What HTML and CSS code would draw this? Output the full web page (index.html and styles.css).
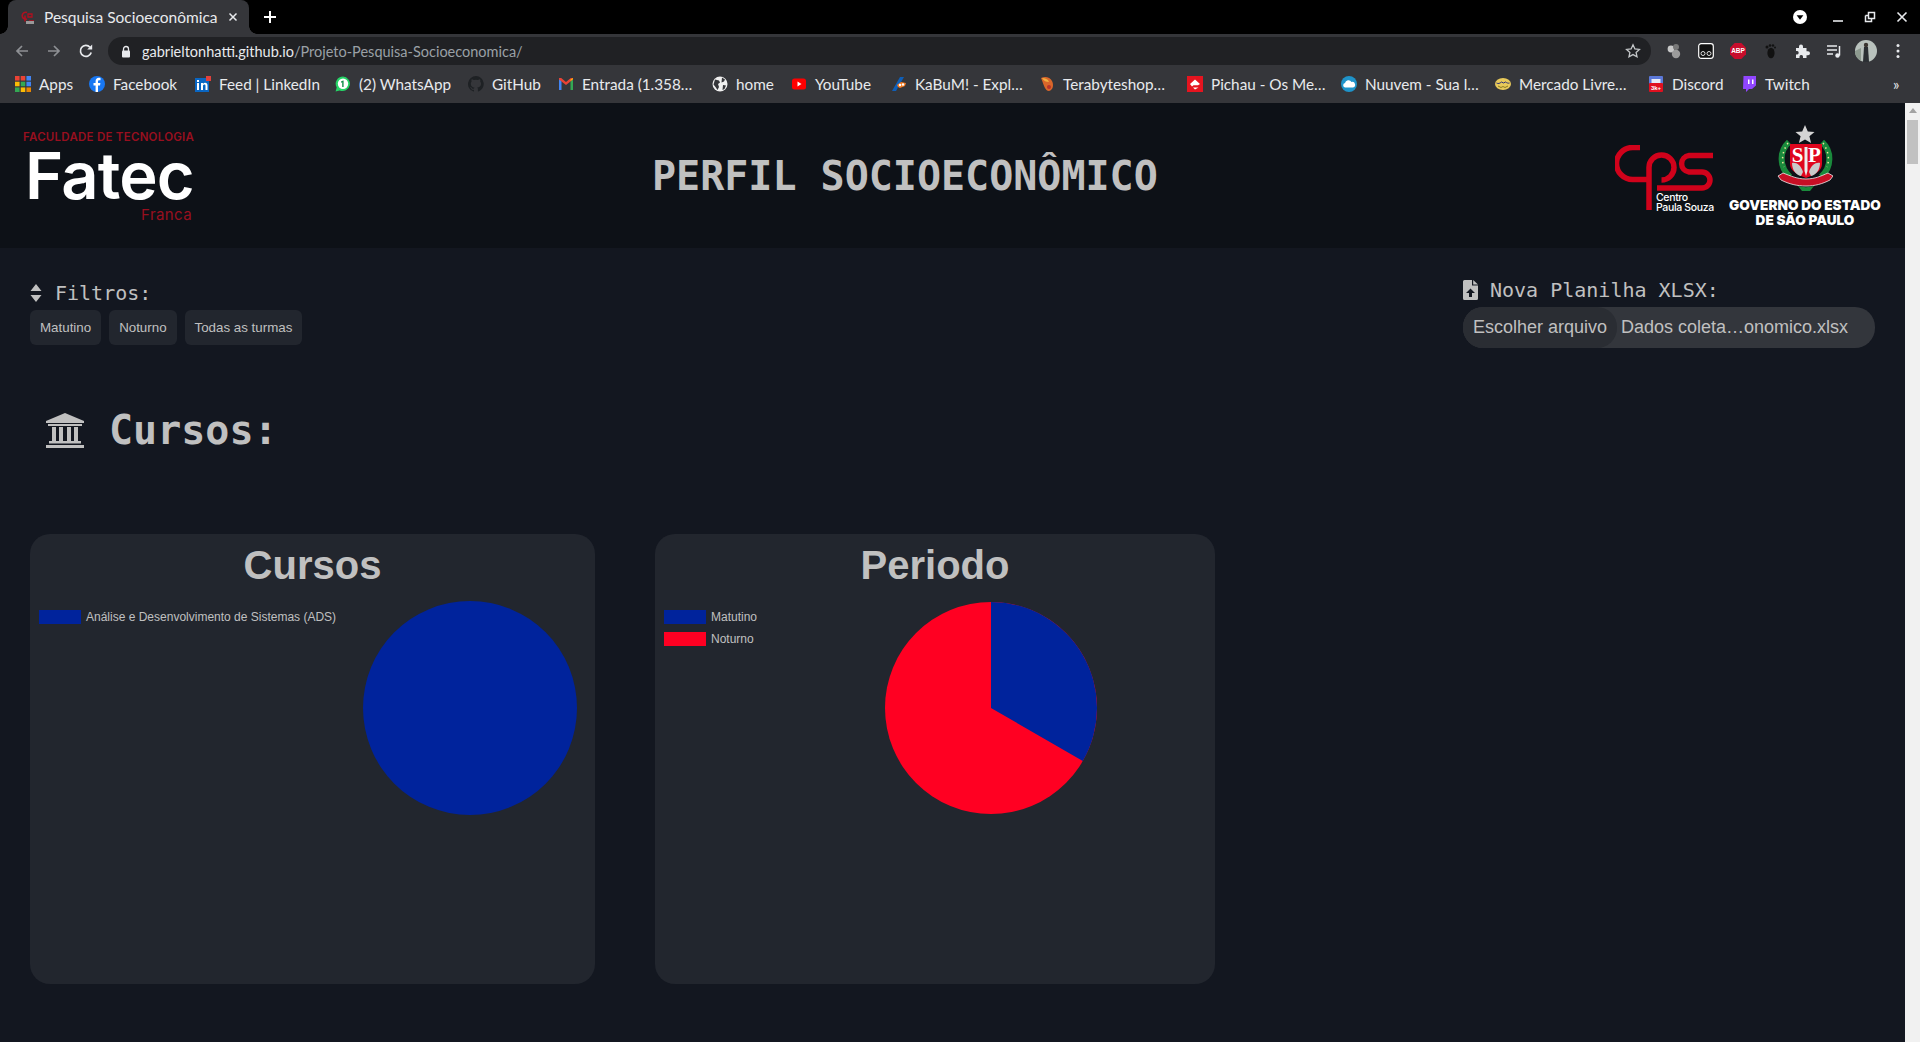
FILE: index.html
```html
<!DOCTYPE html>
<html lang="pt-BR">
<head>
<meta charset="utf-8">
<title>Pesquisa Socioeconômica</title>
<link rel="stylesheet" href="styles.css">
</head>
<body>
<div class="chrome">
  <div class="tabstrip">
    <div class="tab">
      <svg class="tab-fav" viewBox="0 0 16 16"><path d="M7 3.500A3.500 3.500 0 1 0 7 10M5 6.500v6" fill="none" stroke="#b0101f" stroke-width="1.600"/><path d="M8 5h4v3H8zM9 12h5" fill="none" stroke="#b0101f" stroke-width="1.300"/><rect x="6" y="12" width="8" height="3" fill="#999"/></svg>
      <span class="tab-title">Pesquisa Socioeconômica</span>
      <svg class="tab-close" viewBox="0 0 10 10"><path d="M1.500 1.500l7 7M8.500 1.500l-7 7" stroke="#e8eaed" stroke-width="1.500"/></svg>
    </div>
    <svg class="new-tab" viewBox="0 0 12 12"><path d="M6 0v12M0 6h12" stroke="#fff" stroke-width="2"/></svg>
    <div class="win-controls">
      <svg class="win-menu" viewBox="0 0 14 14"><circle cx="7" cy="7" r="7" fill="#fff"/><path d="M3.600 5.200h6.800L7 9.800z" fill="#000"/></svg>
      <svg class="win-btn" viewBox="0 0 12 12"><path d="M1 10h10" stroke="#e8eaed" stroke-width="1.600"/></svg>
      <svg class="win-btn" viewBox="0 0 12 12"><path d="M4.500 1.500h6v6h-6zM1.500 4.500h3M1.500 4.500v6h6v-3" fill="none" stroke="#e8eaed" stroke-width="1.500"/></svg>
      <svg class="win-btn" viewBox="0 0 12 12"><path d="M1.500 1.500l9 9M10.500 1.500l-9 9" stroke="#e8eaed" stroke-width="1.600"/></svg>
    </div>
  </div>
  <div class="toolbar">
    <svg class="nav-icon" viewBox="0 0 16 16"><path d="M14 8H3M8 3L3 8l5 5" fill="none" stroke="#8e9094" stroke-width="1.700"/></svg>
    <svg class="nav-icon" viewBox="0 0 16 16"><path d="M2 8h11M8 3l5 5-5 5" fill="none" stroke="#8e9094" stroke-width="1.700"/></svg>
    <svg class="nav-icon" viewBox="0 0 16 16"><path d="M13.200 9.500A5.500 5.500 0 1 1 12 4.200" fill="none" stroke="#e8eaed" stroke-width="1.700"/><path d="M14.200 1.500v5h-5z" fill="#e8eaed"/></svg>
    <div class="urlbar">
      <svg class="lock" viewBox="0 0 10 13"><path d="M2.500 6V4a2.500 2.500 0 0 1 5 0v2" fill="none" stroke="#e8eaed" stroke-width="1.300"/><rect x="1" y="5.500" width="8" height="7" rx="1" fill="#e8eaed"/></svg>
      <span class="url"><span class="url-host">gabrieltonhatti.github.io</span>/Projeto-Pesquisa-Socioeconomica/</span>
      <svg class="star" viewBox="0 0 16 16"><path d="M8 1.800l1.900 4.100 4.500.5-3.300 3 .9 4.400L8 11.600l-4 2.200.9-4.400-3.300-3 4.500-.5z" fill="none" stroke="#c4c7c9" stroke-width="1.300"/></svg>
    </div>
    <div class="extensions">
      <svg class="ext" viewBox="0 0 16 16"><circle cx="5" cy="6" r="3.400" fill="#c8c8c8"/><circle cx="10" cy="4" r="3" fill="#777"/><circle cx="10" cy="11" r="4.200" fill="#9b9b9b"/></svg>
      <svg class="ext" viewBox="0 0 16 16"><rect x=".7" y=".7" width="14.600" height="14.600" rx="2.500" fill="#111" stroke="#fff" stroke-width="1.200"/><circle cx="5" cy="10.500" r="2" fill="none" stroke="#ddd"/><circle cx="11" cy="10.500" r="2" fill="none" stroke="#ddd"/></svg>
      <svg class="ext" viewBox="0 0 16 16"><path d="M4.700 0h6.600L16 4.700v6.600L11.300 16H4.700L0 11.300V4.700z" fill="#c70d2c"/><text x="8" y="10.400" class="abp">ABP</text></svg>
      <svg class="ext" viewBox="0 0 16 16"><ellipse cx="9" cy="10" rx="3.600" ry="5.200" fill="#111"/><circle cx="5" cy="4" r="1.500" fill="#111"/><circle cx="8" cy="2.500" r="1.300" fill="#111"/><circle cx="11" cy="2.500" r="1.200" fill="#111"/><circle cx="13" cy="4.500" r="1" fill="#111"/></svg>
      <svg class="ext" viewBox="0 0 16 16"><path d="M2 5h3V3.500a2 2 0 0 1 4 0V5h3.500v3.300H14a2 2 0 0 1 0 4h-1.500V15H9v-1.500a1.800 1.800 0 0 0-3.500 0V15H2v-3.500h1.300a1.800 1.800 0 0 0 0-3.500H2z" fill="#e8eaed"/></svg>
      <svg class="ext" viewBox="0 0 16 16"><path d="M1 3h10M1 7h10M1 11h6" stroke="#e8eaed" stroke-width="1.500"/><path d="M13.500 3v9.500" stroke="#e8eaed" stroke-width="1.500"/><circle cx="11.500" cy="12.500" r="2.200" fill="#e8eaed"/></svg>
      <svg class="avatar" viewBox="0 0 22 22"><circle cx="11" cy="11" r="11" fill="#b9c2bd"/><path d="M0 11a11 11 0 0 0 6 10V8z" fill="#8d9a8f"/><path d="M9 7h4l1 15H8z" fill="#2b2f33"/><circle cx="11" cy="5" r="2.200" fill="#3a3530"/></svg>
      <svg class="ext-menu" viewBox="0 0 4 16"><circle cx="2" cy="2.500" r="1.500" fill="#e8eaed"/><circle cx="2" cy="8" r="1.500" fill="#e8eaed"/><circle cx="2" cy="13.500" r="1.500" fill="#e8eaed"/></svg>
    </div>
  </div>
  <div class="bookmarks">
    <div class="bm-grid">
      <div class="bm"><svg class="fav" viewBox="0 0 14 14"><path d="M0 0h4v4H0z" fill="#ea4335"/><path d="M5 0h4v4H5z" fill="#ea4335"/><path d="M10 0h4v4h-4z" fill="#4285f4"/><path d="M0 5h4v4H0z" fill="#fbbc05"/><path d="M5 5h4v4H5z" fill="#34a853"/><path d="M10 5h4v4h-4z" fill="#4285f4"/><path d="M0 10h4v4H0z" fill="#34a853"/><path d="M5 10h4v4H5z" fill="#fbbc05"/><path d="M10 10h4v4h-4z" fill="#ea8600"/></svg><span>Apps</span></div>
      <div class="bm"><svg class="fav" viewBox="0 0 16 16"><circle cx="8" cy="8" r="8" fill="#1877f2"/><path d="M9 16V9.500h2l.4-2.500H9V5.500c0-.8.400-1.300 1.400-1.300h1.100V2c-.6-.1-1.200-.2-1.900-.2C8 1.800 6.600 3 6.600 5.200V7H4.500v2.500h2.100V16z" fill="#fff"/></svg><span>Facebook</span></div>
      <div class="bm"><svg class="fav" viewBox="0 0 16 16"><rect y="2" width="14" height="14" fill="#0a66c2"/><rect x="11" y="0" width="5" height="5" fill="#e0413c"/><path d="M2 7h2v7H2zM2 4h2v2H2zM6 7h2v1c.5-.8 1.200-1.200 2.100-1.200 1.600 0 2.400 1 2.400 2.800V14h-2v-4c0-.9-.3-1.400-1.100-1.400S8 9.200 8 10v4H6z" fill="#fff"/></svg><span>Feed | LinkedIn</span></div>
      <div class="bm"><svg class="fav" viewBox="0 0 16 16"><path d="M8 .5a7.300 7.300 0 0 0-6.300 11L.6 15.500l4.100-1A7.300 7.300 0 1 0 8 .5z" fill="#25d366"/><circle cx="8" cy="7.800" r="5.200" fill="#fff"/><path d="M8.600 4.500v6.500H7.200V6.300L6 6.800V5.600l2-1.100z" fill="#128c4a"/></svg><span>(2) WhatsApp</span></div>
      <div class="bm"><svg class="fav" viewBox="0 0 16 16"><path d="M8 0a8 8 0 0 0-2.500 15.600c.4.100.5-.2.500-.4v-1.400c-2.200.5-2.700-1-2.700-1-.4-.9-.9-1.200-.9-1.200-.7-.5.100-.5.100-.5.800.100 1.200.8 1.200.8.700 1.200 1.900.9 2.300.7.100-.5.300-.9.500-1.100-1.800-.2-3.700-.9-3.700-4 0-.9.300-1.600.8-2.100-.1-.2-.4-1 .1-2.100 0 0 .7-.2 2.200.8a7.500 7.500 0 0 1 4 0c1.500-1 2.200-.8 2.200-.8.400 1.100.2 1.900.1 2.100.5.600.8 1.300.8 2.100 0 3.100-1.900 3.700-3.700 3.900.3.300.6.800.6 1.500v2.200c0 .2.100.5.600.4A8 8 0 0 0 8 0z" fill="#1e2124"/></svg><span>GitHub</span></div>
      <div class="bm"><svg class="fav" viewBox="0 0 16 16"><path d="M1 14V3l2.500 0L3.500 14z" fill="#4285f4"/><path d="M12.500 14V3L15 3v11z" fill="#34a853"/><path d="M1 3.500L8 9l7-5.500V2L12.800 2 8 6 3.200 2 1 2z" fill="#ea4335"/><path d="M12.500 5L15 3.200V2l-2.500 1.500z" fill="#fbbc05"/></svg><span>Entrada (1.358…</span></div>
      <div class="bm"><svg class="fav" viewBox="0 0 16 16"><circle cx="8" cy="8" r="7.500" fill="#f0f0f0"/><path d="M3 3.500l4 1 1 2-2 1.500 1 3-1.500 3-2-3-2-2.500zM10 1.500l3 2-1 2-2.500 1zM11 9l3 .5-1.500 3.500-2 1z" fill="#35363a"/></svg><span>home</span></div>
      <div class="bm"><svg class="fav" viewBox="0 0 16 16"><rect x="1" y="2.500" width="14" height="11" rx="2.500" fill="#f00"/><path d="M6.500 5.500v5l4-2.500z" fill="#fff"/></svg><span>YouTube</span></div>
      <div class="bm"><svg class="fav" viewBox="0 0 16 16"><path d="M1 15L9 1l4 0L5 15z" fill="#0f5fb8"/><path d="M6 9l4-3 5 1-1 3-5 2-2-1z" fill="#f47a20"/><circle cx="9" cy="9" r="1.200" fill="#fff"/><circle cx="12" cy="8.500" r="1.200" fill="#fff"/></svg><span>KaBuM! - Expl…</span></div>
      <div class="bm"><svg class="fav" viewBox="0 0 16 16"><path d="M2 2c4-2 9-1 11 3s1 9-3 10C6 15 5 9 2 2z" fill="#d9662a"/><path d="M3 2c3 0 6 1 7 4-3 0-5-1-7-4z" fill="#f0b040"/><circle cx="10" cy="11" r="2" fill="#b8322a"/></svg><span>Terabyteshop…</span></div>
      <div class="bm"><svg class="fav" viewBox="0 0 16 16"><rect width="16" height="16" fill="#e5141f"/><path d="M3 8l5-4.500L13 8l-2 1.200H6.500L5 10.500z" fill="#fff"/><path d="M6 11.500h5.500L8 13.500z" fill="#fff"/></svg><span>Pichau - Os Me…</span></div>
      <div class="bm"><svg class="fav" viewBox="0 0 16 16"><circle cx="8" cy="8" r="8" fill="#1f93c9"/><path d="M4 11.500a2.300 2.300 0 0 1 0-4.500 3.500 3.500 0 0 1 6.500-1 2.800 2.800 0 0 1 1.500 5.500z" fill="#fff"/></svg><span>Nuuvem - Sua l…</span></div>
      <div class="bm"><svg class="fav" viewBox="0 0 16 16"><ellipse cx="8" cy="8" rx="8" ry="6" fill="#e8c95a"/><path d="M1.500 7c2 1 3 .5 5-1l2 1 2-1c1.500 1 3 1.500 4 1" fill="none" stroke="#2d3277" stroke-width="1"/><path d="M3 10l3 1.500 2-1 2 1 3-1.500" fill="none" stroke="#8a7a20"/></svg><span>Mercado Livre…</span></div>
      <div class="bm"><svg class="fav" viewBox="0 0 16 16"><rect x="1" width="14" height="9" rx="1" fill="#5b78d8"/><rect x="3.500" y="3" width="9" height="4" fill="#e8ebf5"/><rect x="1" y="7" width="14" height="9" rx="1" fill="#e0101f"/><text x="8" y="14.200" class="k3">3k+</text></svg><span>Discord</span></div>
      <div class="bm"><svg class="fav" viewBox="0 0 16 16"><path d="M2.500 0H15v9.500L11 13H8l-3 3v-3H2z" fill="#9146ff"/><path d="M7 3.500h1.500v4.500H7zM11 3.500h1.500v4.500H11z" fill="#fff"/></svg><span>Twitch</span></div>
    </div>
    <span class="bm-more">»</span>
  </div>
</div>

<div class="viewport">
  <main class="page">
    <header class="site-header">
      <div class="fatec">
        <span class="fatec-top">FACULDADE DE TECNOLOGIA</span>
        <span class="fatec-name">Fatec</span>
        <span class="fatec-city">Franca</span>
      </div>
      <h1 class="site-title">PERFIL SOCIOECONÔMICO</h1>
      <div class="partner-logos">
        <div class="cps">
          <svg class="cps-mark" viewBox="0 0 98 65">
            <path d="M25 2.500H17.500A16 16 0 0 0 17.500 34.500H34" fill="none" stroke="#d0021b" stroke-width="5.500"/>
            <path d="M34 65V22.500A12.500 12.500 0 1 1 46.500 35" fill="none" stroke="#d0021b" stroke-width="5.500"/>
            <path d="M98 10.500H74A8.300 8.300 0 0 0 74 27H87A8 8 0 0 1 87 43H42" fill="none" stroke="#d0021b" stroke-width="5.500"/>
          </svg>
          <span class="cps-text">Centro<br>Paula Souza</span>
        </div>
        <div class="gov">
          <svg class="arms" viewBox="0 0 56 67">
            <path d="M28 0l2.800 6.400 6.700.5-5.100 4.400 1.700 6.700-6.100-3.600-6.100 3.600 1.700-6.700-5.100-4.400 6.700-.5z" fill="#d4d4d4"/>
            <path d="M12 17C2 26 2 42 13 52M45 17C55 26 55 42 44 52" fill="none" stroke="#1a8a3c" stroke-width="6"/>
            <path d="M11 18c-5 7-7 16-4 24M46 18c5 7 7 16 4 24" fill="none" stroke="#f2e6a0" stroke-width="1.500" stroke-dasharray="1.500 3.500"/>
            <path d="M13 19h32v20c0 7-8 11-16 14-8-3-16-7-16-14z" fill="#e0061e"/>
            <text class="arms-letter" x="20.500" y="37">S</text>
            <text class="arms-letter" x="37.500" y="37">P</text>
            <path d="M27.500 22h3v24l-1.500 5-1.500-5z" fill="#ececec"/>
            <path d="M15 38c4-1 9 2 11 9l-2 4c-5-1-9-6-9-13zM43 38c-4-1-9 2-11 9l2 4c5-1 9-6 9-13z" fill="#c9c9c9"/>
            <path d="M1 51l5-3c8 3 14 6 23 6s15-3 22-6l5 3-3 4c-8 4-15 6-24 6s-17-2-25-6z" fill="#c70f25" stroke="#eee" stroke-width=".8"/>
            <path d="M21 61c5 1.500 11 1.500 16 0l-4 5h-8z" fill="#1a8a3c"/>
          </svg>
          <span class="gov-text">GOVERNO DO ESTADO<br>DE SÃO PAULO</span>
        </div>
      </div>
    </header>

    <section class="controls">
      <div class="filters">
        <h2 class="control-title">
          <svg class="sort-icon" viewBox="0 0 12 18"><path d="M6 0l5.500 7H.5zM6 18L.5 11h11z" fill="#c0c0c0"/></svg>
          <span>Filtros:</span>
        </h2>
        <div class="filter-buttons">
          <button class="filter-btn">Matutino</button>
          <button class="filter-btn">Noturno</button>
          <button class="filter-btn">Todas as turmas</button>
        </div>
      </div>
      <div class="upload">
        <h2 class="control-title">
          <svg class="file-icon" viewBox="0 0 15 20"><path d="M0 1.500A1.500 1.500 0 0 1 1.500 0H9v5.500h6v13a1.500 1.500 0 0 1-1.500 1.500h-12A1.500 1.500 0 0 1 0 18.500z" fill="#c0c0c0"/><path d="M10.200 0L15 4.500h-4.800z" fill="#c0c0c0"/><path d="M7.500 8.500L12 13H9v4H6v-4H3z" fill="#131720"/></svg>
          <span>Nova Planilha XLSX:</span>
        </h2>
        <div class="file-input">
          <span class="file-btn">Escolher arquivo</span>
          <span class="file-name">Dados coleta…onomico.xlsx</span>
        </div>
      </div>
    </section>

    <h2 class="section-title">
      <svg class="bank-icon" viewBox="0 0 38 35"><path d="M19 0l19 8v2H0V8z" fill="#c0c0c0"/><rect x="2" y="11" width="34" height="2" fill="#c0c0c0"/><path d="M6 14h4v14H6zM13 14h4v14h-4zM21 14h4v14h-4zM28 14h4v14h-4z" fill="#c0c0c0"/><rect x="3" y="28" width="32" height="2.500" fill="#c0c0c0"/><rect y="32" width="38" height="3" fill="#c0c0c0"/></svg>
      <span>Cursos:</span>
    </h2>

    <section class="charts">
      <article class="card card-courses">
        <h3 class="card-title">Cursos</h3>
        <ul class="legend">
          <li class="legend-item"><i class="swatch swatch-blue"></i>Análise e Desenvolvimento de Sistemas (ADS)</li>
        </ul>
        <svg class="pie pie-courses" viewBox="0 0 214 214"><circle cx="107" cy="107" r="107" fill="#00239c"/></svg>
      </article>
      <article class="card card-period">
        <h3 class="card-title">Periodo</h3>
        <ul class="legend">
          <li class="legend-item"><i class="swatch swatch-blue"></i>Matutino</li>
          <li class="legend-item"><i class="swatch swatch-red"></i>Noturno</li>
        </ul>
        <svg class="pie pie-period" viewBox="0 0 212 212"><circle cx="106" cy="106" r="106" fill="#ff0022"/><path d="M106 106V0A106 106 0 0 1 197.800 159z" fill="#00239c"/></svg>
      </article>
    </section>
  </main>
  <div class="scrollbar">
    <span class="scroll-up"></span>
    <span class="scroll-thumb"></span>
  </div>
</div>
</body>
</html>
```
FILE: styles.css
```css
* { box-sizing: border-box; }
html, body { margin: 0; height: 100%; overflow: hidden; }
body {
  display: flex;
  flex-direction: column;
  background: #131720;
  font-family: "Liberation Sans", Arial, sans-serif;
}

/* browser chrome */
.chrome { flex: none; height: 103px; background: #35363a; font-family: Lato, "Noto Sans", sans-serif; color: #e8eaed; }
.tabstrip { height: 34px; background: #000; display: flex; align-items: center; padding-left: 8px; }
.tab {
  position: relative;
  width: 241px;
  height: 34px;
  background: #35363a;
  border-radius: 8px 8px 0 0;
  display: flex;
  align-items: center;
  padding: 0 11px 0 12px;
}
.tab::before, .tab::after {
  content: "";
  position: absolute;
  bottom: 0;
  width: 8px;
  height: 8px;
  background: radial-gradient(circle at 0 0, #000 7.5px, #35363a 8px);
}
.tab::before { left: -8px; }
.tab::after { right: -8px; background: radial-gradient(circle at 100% 0, #000 7.5px, #35363a 8px); }
.tab-fav { width: 16px; height: 16px; flex: none; }
.tab-title { margin-left: 8px; font-size: 15.5px; white-space: nowrap; flex: 1; }
.tab-close { width: 10px; height: 10px; flex: none; }
.new-tab { width: 12px; height: 12px; margin-left: 15px; flex: none; }
.win-controls { margin-left: auto; display: flex; align-items: center; padding-right: 12px; }
.win-menu { width: 14px; height: 14px; margin-right: 5px; }
.win-btn { width: 12px; height: 12px; margin-left: 20px; }

.toolbar { height: 34px; display: flex; align-items: center; padding-left: 14px; }
.nav-icon { width: 16px; height: 16px; margin-right: 16px; flex: none; }
.urlbar {
  width: 1543px;
  height: 28px;
  margin-left: -2px;
  background: #202124;
  border-radius: 14px;
  display: flex;
  align-items: center;
  padding: 0 10px 0 13px;
  flex: none;
}
.lock { width: 10px; height: 13px; flex: none; }
.url { margin-left: 11px; font-size: 14.5px; color: #9aa0a6; white-space: nowrap; }
.url-host { color: #e8eaed; }
.star { width: 16px; height: 16px; margin-left: auto; flex: none; }
.extensions { display: flex; align-items: center; margin-left: 15px; }
.ext { width: 16px; height: 16px; margin-right: 16px; flex: none; }
.avatar { width: 22px; height: 22px; margin-left: -3px; flex: none; }
.ext-menu { width: 4px; height: 16px; margin-left: 19px; flex: none; }
.abp { font: 700 6.5px "Liberation Sans", sans-serif; fill: #fff; text-anchor: middle; }
.k3 { font: 700 6px "Liberation Sans", sans-serif; fill: #fff; text-anchor: middle; }

.bookmarks { height: 35px; display: flex; align-items: center; padding-left: 15px; padding-bottom: 3px; }
.bm-grid {
  display: grid;
  grid-template-columns: 74px 106px 140px 133px 90px 154px 79px 100px 148px 148px 154px 154px 153px 93px 70px;
}
.bm { display: flex; align-items: center; gap: 8px; font-size: 15.3px; white-space: nowrap; overflow: hidden; }
.fav { width: 16px; height: 16px; flex: none; }
.bm-more { margin-left: 82px; font-size: 15px; }

/* page */
.viewport { flex: 1; min-height: 0; display: flex; }
.page { flex: 1; min-width: 0; overflow: hidden; color: #c0c0c0; }
.scrollbar { flex: none; width: 15px; background: #f1f1f1; display: flex; flex-direction: column; align-items: center; }
.scroll-up { width: 0; height: 0; margin-top: 5px; border: 4px solid transparent; border-top: 0; border-bottom: 5px solid #a3a3a3; }
.scroll-thumb { width: 11px; height: 44px; margin-top: 7px; background: #c1c1c1; }

.site-header {
  position: relative;
  height: 145px;
  background: #0d1117;
  display: flex;
  align-items: flex-start;
  justify-content: space-between;
  padding: 0 24px 0 23px;
}
.fatec { display: flex; flex-direction: column; width: 172px; padding-top: 28px; color: #980f1f; }
.fatec-top { font: 600 11.5px/12px Inter, sans-serif; white-space: nowrap; letter-spacing: .25px; }
.fatec-name { font: 600 65px/62px Inter, sans-serif; color: #fff; letter-spacing: -.8px; margin: 2px 0 0 2px; }
.fatec-city { font: 400 15px/15px Inter, sans-serif; text-align: right; letter-spacing: .4px; padding-right: 3px; }
.site-title { margin: 0; font: 700 40px/48px "DejaVu Sans Mono", monospace; color: #c0c0c0; position: absolute; left: 652px; top: 49px; }
.partner-logos { display: flex; align-items: flex-start; gap: 16px; }
.cps { position: relative; width: 98px; height: 65px; margin-top: 42px; }
.cps-mark { width: 98px; height: 65px; display: block; }
.cps-text {
  position: absolute;
  left: 41px;
  top: 48px;
  font: 500 10.5px/9.5px Inter, sans-serif;
  letter-spacing: -.35px;
  color: #fff;
  white-space: nowrap;
}
.gov { display: flex; flex-direction: column; align-items: center; width: 152px; margin-top: 22px; }
.arms { width: 56px; height: 67px; display: block; }
.arms-letter { font: 700 21px "Liberation Serif", serif; fill: #fff; text-anchor: middle; }
.gov-text { margin-top: 6px; font: 900 13.6px/15px Inter, sans-serif; color: #fff; text-align: center; white-space: nowrap; }

.controls { display: flex; justify-content: space-between; align-items: flex-start; padding: 30px 30px 0; }
.filters { padding-top: 3px; }
.control-title { margin: 0; display: flex; align-items: center; font: 400 20px/24px "DejaVu Sans Mono", monospace; color: #c0c0c0; }
.sort-icon { width: 12px; height: 18px; margin-right: 13px; }
.file-icon { width: 15px; height: 20px; margin-right: 12px; }
.filter-buttons { display: flex; gap: 8px; margin-top: 5px; }
.filter-btn {
  height: 35px;
  padding: 0 10px;
  border: 0;
  border-radius: 6px;
  background: #22262e;
  color: #c0c0c0;
  font: 400 13.33px "Liberation Sans", Arial, sans-serif;
}
.file-input {
  width: 412px;
  height: 41px;
  margin-top: 5px;
  border-radius: 20px;
  background: #33363c;
  display: flex;
  align-items: center;
  font-size: 18px;
  color: #c0c0c0;
  white-space: nowrap;
}
.file-btn {
  width: 154px;
  height: 41px;
  line-height: 41px;
  padding-left: 10px;
  background: #2a2d33;
  border-radius: 20px;
}
.file-name { margin-left: 4px; }

.section-title { margin: 58px 0 0 46px; display: flex; align-items: center; font: 700 40px/48px "DejaVu Sans Mono", monospace; color: #c0c0c0; }
.bank-icon { width: 38px; height: 35px; margin-right: 25px; }

.charts { display: flex; gap: 60px; padding: 80px 0 0 30px; }
.card { position: relative; height: 450px; background: #22262e; border-radius: 20px; flex: none; }
.card-courses { width: 565px; }
.card-period { width: 560px; }
.card-title { margin: 0; padding-top: 8px; font: 700 40px/46px "Liberation Sans", Arial, sans-serif; text-align: center; color: #c0c0c0; }
.legend { list-style: none; margin: 0; padding: 22px 0 0 9px; display: flex; flex-direction: column; gap: 8px; }
.legend-item { display: flex; align-items: center; height: 14px; gap: 5px; font-size: 12px; color: #c0c0c0; }
.swatch { width: 42px; height: 14px; flex: none; }
.swatch-blue { background: #00239c; }
.swatch-red { background: #ff0022; }
.pie { position: absolute; display: block; }
.pie-courses { width: 214px; height: 214px; left: 333px; top: 67px; }
.pie-period { width: 212px; height: 212px; left: 230px; top: 68px; }
```
